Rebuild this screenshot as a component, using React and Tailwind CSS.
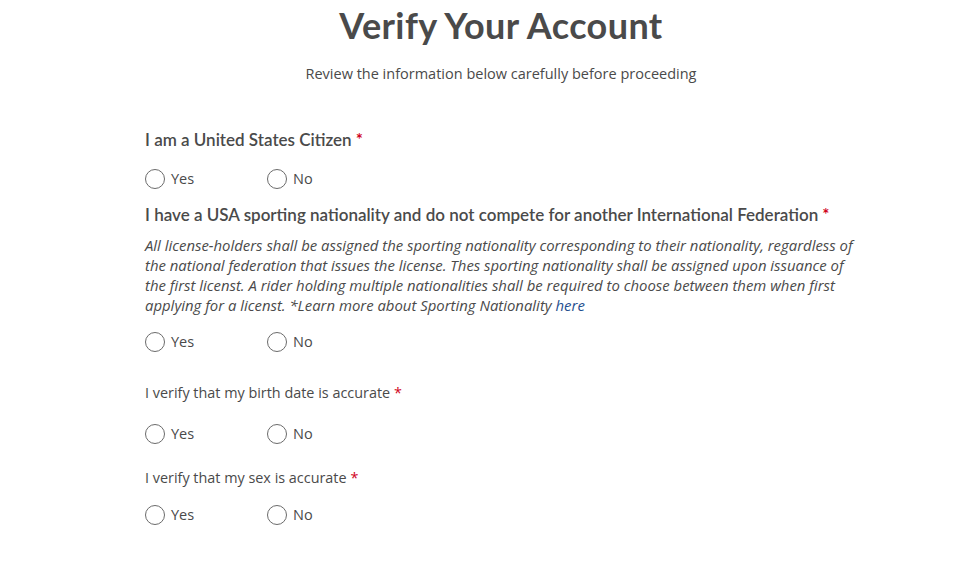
import React from "react";

const body = { fontFamily: '"Open Sans", "Noto Sans", sans-serif' };
const head = { fontFamily: 'Lato, "Open Sans", sans-serif' };

function Radio({ label }) {
  return (
    <label className="flex items-center w-[122px] cursor-pointer">
      <span className="w-[20px] h-[20px] rounded-full border border-[#6b6b6b] bg-white shrink-0" />
      <span className="ml-[6px] text-[14.5px] text-[#4a4a4a]" style={body}>{label}</span>
    </label>
  );
}

function YesNo({ className = "" }) {
  return (
    <div className={`flex items-center h-[24px] ${className}`}>
      <Radio label="Yes" />
      <Radio label="No" />
    </div>
  );
}

const Req = () => <span className="text-[#d0021b] ml-[4px]">*</span>;

export default function App() {
  return (
    <div className="min-h-screen bg-white text-[#4a4a4a]">
      <div className="ml-[145px] w-[712px] pt-[3px]">
        <h1 className="text-center text-[36px] leading-[44px] font-bold tracking-[0.4px] text-[#4a4a4a]" style={head}>
          Verify Your Account
        </h1>
        <p className="text-center text-[14.5px] leading-[22px] mt-[16px]" style={body}>
          Review the information below carefully before proceeding
        </p>

        <div className="mt-[43px] text-[17px] leading-[24px] font-semibold" style={head}>
          I am a United States Citizen<Req />
        </div>
        <YesNo className="mt-[15px]" />

        <div className="mt-[12px] text-[17px] leading-[24px] font-semibold" style={head}>
          I have a USA sporting nationality and do not compete for another International Federation<Req />
        </div>
        <p className="mt-[8px] text-[14.9px] leading-[20px] italic whitespace-nowrap" style={body}>
          All license-holders shall be assigned the sporting nationality corresponding to their nationality, regardless of
          <br />
          the national federation that issues the license. Thes sporting nationality shall be assigned upon issuance of
          <br />
          the first licenst. A rider holding multiple nationalities shall be required to choose between them when first
          <br />
          applying for a licenst. *Learn more about Sporting Nationality <a href="#" className="text-[#1f4f8f]">here</a>
        </p>
        <YesNo className="mt-[15px]" />

        <div className="mt-[28px] text-[14.4px] leading-[22px]" style={body}>
          I verify that my birth date is accurate<Req />
        </div>
        <YesNo className="mt-[18px]" />

        <div className="mt-[21px] text-[14.4px] leading-[22px]" style={body}>
          I verify that my sex is accurate<Req />
        </div>
        <YesNo className="mt-[14px]" />
      </div>
    </div>
  );
}
